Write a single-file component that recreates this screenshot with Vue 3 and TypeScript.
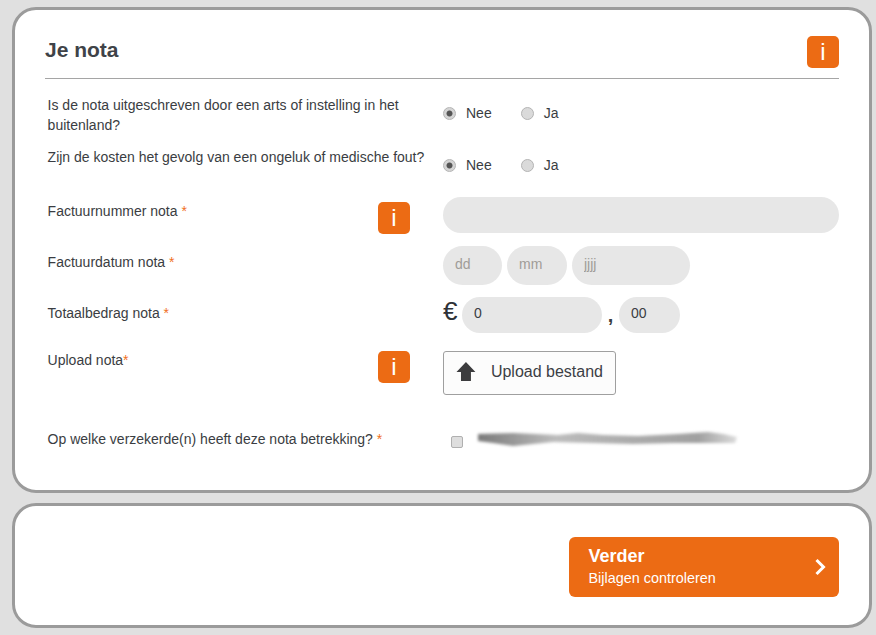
<script setup lang="ts">
import { ref } from 'vue'

const questions = ref([
  { name: 'abroad', text: 'Is de nota uitgeschreven door een arts of instelling in het buitenland?', cls: 'row-q1' },
  { name: 'accident', text: 'Zijn de kosten het gevolg van een ongeluk of medische fout?', cls: 'row-q2' },
])
</script>

<template>
  <div class="page">
    <section class="card card-main">
      <header class="head">
        <h1>Je nota</h1>
        <button class="info" type="button">i</button>
      </header>

      <div v-for="q in questions" :key="q.name" class="row" :class="q.cls">
        <div class="label">{{ q.text }}</div>
        <div class="radios">
          <label class="radio"><input type="radio" :name="q.name" checked /><span>Nee</span></label>
          <label class="radio"><input type="radio" :name="q.name" /><span>Ja</span></label>
        </div>
      </div>

      <div class="row row-number">
        <div class="label">Factuurnummer nota <em>*</em></div>
        <button class="info info-inline info-low" type="button">i</button>
        <input class="field field-full" type="text" />
      </div>

      <div class="row row-date">
        <div class="label">Factuurdatum nota <em>*</em></div>
        <div class="fields">
          <input class="field tall w-dd" type="text" placeholder="dd" />
          <input class="field tall w-mm" type="text" placeholder="mm" />
          <input class="field tall w-yy" type="text" placeholder="jjjj" />
        </div>
      </div>

      <div class="row row-amount">
        <div class="label">Totaalbedrag nota <em>*</em></div>
        <div class="fields amount">
          <span class="euro">€</span>
          <input class="field w-eur" type="text" value="0" />
          <span class="comma">,</span>
          <input class="field w-cent" type="text" value="00" />
        </div>
      </div>

      <div class="row row-upload">
        <div class="label">Upload nota<em>*</em></div>
        <button class="info info-inline" type="button">i</button>
        <button class="upload" type="button">
          <svg width="20" height="19" viewBox="0 0 20 19" aria-hidden="true">
            <path d="M10 0 L19.5 10 H15 V19 H5 V10 H0.5 Z" fill="#3c3c3e" />
          </svg>
          <span>Upload bestand</span>
        </button>
      </div>

      <div class="row row-insured">
        <div class="label nowrap">Op welke verzekerde(n) heeft deze nota betrekking? <em>*</em></div>
        <div class="insured">
          <input class="check" type="checkbox" />
          <svg class="smudge" width="270" height="24" viewBox="0 0 270 24" aria-hidden="true">
            <defs>
              <linearGradient id="sm" x1="0" x2="1" y1="0" y2="0">
                <stop offset="0" stop-color="#7a7a7a" />
                <stop offset="0.3" stop-color="#bcbcbc" />
                <stop offset="0.55" stop-color="#adadad" />
                <stop offset="0.85" stop-color="#a0a0a0" />
                <stop offset="1" stop-color="#dcdcdc" />
              </linearGradient>
            </defs>
            <path
              d="M5 7 L40 6 L85 8 L105 6 L130 8 L165 9 L205 7 L235 5 L250 7 L264 10 L262 16 L235 16 L200 16 L160 17 L120 16 L80 15 L40 19 L20 16 L5 14 Z"
              fill="url(#sm)"
            />
          </svg>
        </div>
      </div>
    </section>

    <section class="card card-next">
      <button class="next" type="button">
        <span class="next-text">
          <strong>Verder</strong>
          <span>Bijlagen controleren</span>
        </span>
        <svg width="12" height="18" viewBox="0 0 12 18" aria-hidden="true">
          <path d="M2.5 2 L9.5 9 L2.5 16" fill="none" stroke="#fff" stroke-width="3" />
        </svg>
      </button>
    </section>
  </div>
</template>

<style>
html, body { margin: 0; background: #e0e0e0; }
</style>

<style scoped>
.page {
  box-sizing: border-box;
  width: 876px;
  height: 635px;
  padding: 7px 4px 0 12px;
  background: #e0e0e0;
  font-family: "Liberation Sans", Arial, sans-serif;
  font-size: 14px;
  line-height: 20px;
  color: #3c3f45;
  overflow: hidden;
}
.card {
  box-sizing: border-box;
  background: #fff;
  border: 3px solid #9b9b9b;
  border-radius: 24px;
  padding: 0 30px;
}
.card-main { height: 486px; }
.card-next {
  height: 125px;
  margin-top: 10px;
  display: flex;
  justify-content: flex-end;
  padding-top: 31px;
}
.head {
  display: flex;
  justify-content: space-between;
  align-items: flex-start;
  height: 69px;
  padding-top: 26px;
  box-sizing: border-box;
  border-bottom: 1px solid #a5a5a5;
}
h1 {
  margin: 1px 0 0;
  font-size: 21px;
  line-height: 26px;
  font-weight: 700;
  color: #3f4348;
}
.info {
  width: 32px;
  height: 32px;
  padding: 0;
  border: 0;
  border-radius: 5px;
  background: #ec6b14;
  color: #fff;
  font-family: "Liberation Sans", Arial, sans-serif;
  font-size: 24px;
  line-height: 28px;
  font-weight: 400;
  display: block;
}
.row {
  display: flex;
  align-items: flex-start;
  position: relative;
  padding-left: 2.6px;
}
.label {
  width: 395.4px;
  flex: none;
  padding-right: 20px;
  box-sizing: border-box;
  color: #3a3d42;
}
.nowrap { white-space: nowrap; }
em { font-style: normal; color: #f0701e; }
.row-q1 { margin-top: 16px; height: 52px; }
.row-q2 { height: 50px; }
.row-q2 .label { padding-right: 0; white-space: nowrap; }
.row-q1 .radios { padding-top: 8px; }
.row-q2 .radios { padding-top: 8px; }
.radios { display: flex; gap: 29px; }
.radio { display: flex; align-items: center; gap: 10px; height: 20px; }
.radio span { color: #3a3d42; }
input[type="radio"] {
  appearance: none;
  box-sizing: border-box;
  width: 13px;
  height: 13px;
  margin: 1px 0 0;
  border-radius: 50%;
  border: 1px solid #b4b4b4;
  background: #dadada;
}
input[type="radio"]:checked {
  background: radial-gradient(circle, #555 0 2.6px, #d4d4d4 3.4px);
}
.row-number { height: 49px; }
.row-date { height: 51px; }
.row-amount { height: 54px; }
.row-upload { height: 78px; }
.row-number .label { padding-top: 4px; }
.row-date .label { padding-top: 6px; }
.row-amount .label { padding-top: 6px; }
.row-upload .label { margin-top: -1px; }
.info-inline {
  position: absolute;
  left: 333px;
  top: 0;
}
.info-low { top: 5px; }
.fields { display: flex; gap: 5px; }
.field {
  box-sizing: border-box;
  height: 36px;
  padding: 0 12px 4px;
  border: 0;
  border-radius: 18px;
  background: #e7e7e7;
  font: 14px "Liberation Sans", Arial, sans-serif;
  color: #3a3d42;
  outline: none;
  min-width: 0;
}
.field::placeholder { color: #a09c98; opacity: 1; }
.field-full { width: 396px; }
.tall { height: 39px; border-radius: 19.5px; padding-bottom: 3px; }
.w-dd { width: 59px; }
.w-mm { width: 60px; }
.w-yy { width: 118px; }
.amount { gap: 0; align-items: flex-start; }
.euro {
  width: 19px;
  margin-top: -1px;
  font-size: 26px;
  line-height: 30px;
  color: #2f3237;
}
.w-eur { width: 140px; }
.comma {
  width: 17px;
  text-align: center;
  font-size: 20px;
  line-height: 36px;
  font-weight: 700;
  color: #3a3d42;
}
.w-cent { width: 61px; }
.upload {
  box-sizing: border-box;
  width: 173px;
  height: 44px;
  padding: 0 12px 2px;
  display: flex;
  align-items: center;
  gap: 15px;
  white-space: nowrap;
  background: #fcfcfc;
  border: 1px solid #9f9f9f;
  border-radius: 3px;
  font: 16px "Liberation Sans", Arial, sans-serif;
  color: #3c3f45;
}
.upload svg { margin-top: -1px; }
.insured { display: flex; align-items: center; position: relative; height: 20px; }
.check {
  appearance: none;
  box-sizing: border-box;
  width: 12px;
  height: 12px;
  margin: 5px 0 0 8px;
  border: 1px solid #b0b0b0;
  border-radius: 2px;
  background: #dedede;
}
.smudge {
  position: absolute;
  left: 30px;
  top: -2px;
  filter: blur(1.6px);
}
.next {
  box-sizing: border-box;
  width: 270px;
  height: 60px;
  padding: 0 13px 0 19.5px;
  border: 0;
  border-radius: 6px;
  background: #ec6b14;
  color: #fff;
  display: flex;
  align-items: center;
  justify-content: space-between;
  font-family: "Liberation Sans", Arial, sans-serif;
  text-align: left;
}
.next-text { display: flex; flex-direction: column; }
.next-text strong { font-size: 18px; line-height: 22px; }
.next-text span { font-size: 14.4px; line-height: 22px; }
</style>
